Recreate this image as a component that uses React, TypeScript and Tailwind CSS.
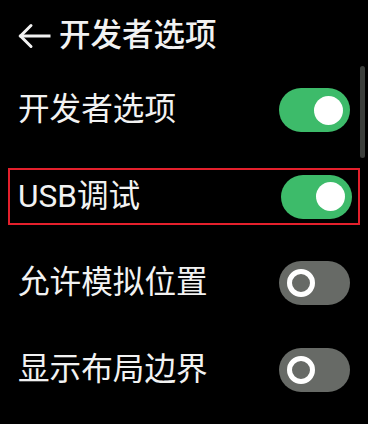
import React from "react";

function Toggle({ on }: { on: boolean }) {
  return on ? (
    <div className="w-[71px] h-[44px] rounded-full bg-[#3dbb6a] flex items-center justify-end pr-[7px] shrink-0">
      <div className="w-[29px] h-[29px] rounded-full bg-white" />
    </div>
  ) : (
    <div className="w-[71px] h-[44px] rounded-full bg-[#676a66] flex items-center justify-start pl-[8px] shrink-0">
      <div className="w-[28px] h-[28px] rounded-full border-[5px] border-white" />
    </div>
  );
}

export default function App() {
  const font = "font-['Roboto','Noto_Sans_CJK_SC',sans-serif]";
  return (
    <div className={`relative w-[368px] h-[424px] bg-black overflow-hidden text-[#f2f2f2] ${font}`}>
      <div className="h-[67px] pt-[5px] pl-[18px] flex items-center gap-[8px]">
        <svg width="33" height="26" viewBox="0 0 33 26" fill="none" stroke="#f2f2f2" strokeWidth="3" strokeLinecap="square">
          <path d="M3 13H31" />
          <path d="M13 2.5L2.5 13L13 23.5" strokeLinecap="round" strokeLinejoin="miter" />
        </svg>
        <span className="text-[31.5px] font-medium leading-none">开发者选项</span>
      </div>

      <div className="h-[86.5px] flex items-center justify-between pl-[18px] pr-[18px]">
        <span className="text-[31.6px] leading-none">开发者选项</span>
        <Toggle on />
      </div>

      <div className="h-[86.5px] flex items-center px-[8px]">
        <div className="w-full h-[57px] border-2 border-[#e4202c] flex items-center justify-between pl-[8px] pr-[6px]">
          <span className="text-[31.6px] leading-none">USB调试</span>
          <Toggle on />
        </div>
      </div>

      <div className="h-[86.5px] flex items-center justify-between pl-[18px] pr-[18px]">
        <span className="text-[31.6px] leading-none">允许模拟位置</span>
        <Toggle on={false} />
      </div>

      <div className="h-[86.5px] flex items-center justify-between pl-[18px] pr-[18px]">
        <span className="text-[31.6px] leading-none">显示布局边界</span>
        <Toggle on={false} />
      </div>

      <div className="absolute left-[360px] top-[66px] w-[5px] h-[92px] rounded-full bg-[#3b3e3b]" />
    </div>
  );
}
